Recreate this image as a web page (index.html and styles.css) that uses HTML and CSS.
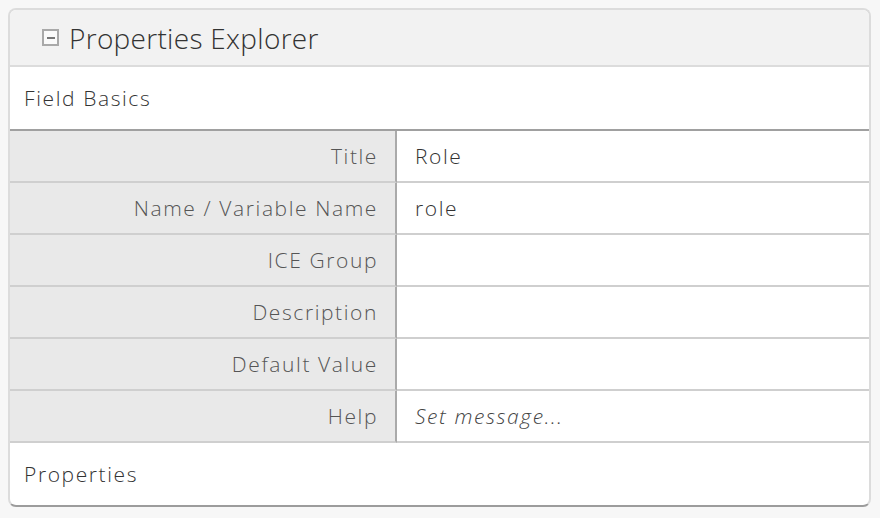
FILE: index.html
```html
<!DOCTYPE html>
<html>
<head>
<meta charset="utf-8">
<link rel="stylesheet" href="styles.css">
</head>
<body>
<div class="panel">
  <div class="panel-head">
    <span class="toggle"><span class="minus"></span></span>
    <span class="panel-title">Properties Explorer</span>
  </div>
  <div class="section">Field Basics</div>
  <div class="grid">
    <div class="label">Title</div><div class="value">Role</div>
    <div class="label">Name / Variable Name</div><div class="value">role</div>
    <div class="label">ICE Group</div><div class="value"></div>
    <div class="label">Description</div><div class="value"></div>
    <div class="label">Default Value</div><div class="value"></div>
    <div class="label">Help</div><div class="value placeholder">Set message...</div>
  </div>
  <div class="section last">Properties</div>
</div>
</body>
</html>
```
FILE: styles.css
```css
html, body {
  margin: 0;
  padding: 0;
  background: #f7f7f7;
}
body {
  padding: 8px 0 0 8px;
  font-family: "Open Sans", "Lato", sans-serif;
  color: #444;
}
.panel {
  box-sizing: border-box;
  width: 863px;
  border: 2px solid #dcdcdc;
  border-bottom-color: #9c9c9c;
  border-radius: 8px;
  background: #fff;
  overflow: hidden;
}
.panel-head {
  height: 55px;
  background: #f2f2f2;
  border-bottom: 2px solid #dcdcdc;
  display: flex;
  align-items: center;
  padding-left: 32px;
  gap: 10px;
}
.toggle {
  box-sizing: border-box;
  width: 17px;
  height: 17px;
  border: 2px solid #a9a9a9;
  background: #fafafa;
  display: flex;
  align-items: center;
  justify-content: center;
}
.minus {
  width: 8px;
  height: 2px;
  background: #777;
}
.panel-title {
  font-size: 28px;
  font-weight: 300;
  color: #333;
  letter-spacing: 0.3px;
}
.section {
  height: 62px;
  display: flex;
  align-items: center;
  padding-left: 14px;
  font-size: 21px;
  font-weight: 300;
  color: #333;
  letter-spacing: 1.6px;
  border-bottom: 2px solid #a0a0a0;
}
.section.last {
  border-bottom: none;
}
.grid {
  display: grid;
  grid-template-columns: 387px 1fr;
}
.label, .value {
  height: 50px;
  border-bottom: 2px solid #cfcfcf;
  display: flex;
  align-items: center;
  font-size: 21px;
  font-weight: 300;
  letter-spacing: 1.6px;
}
.label {
  background: #e9e9e9;
  border-right: 2px solid #aaaaaa;
  justify-content: flex-end;
  padding-right: 17px;
  color: #555;
}
.value {
  padding-left: 18px;
  color: #333;
}
.placeholder {
  font-style: italic;
  color: #444;
}
```
